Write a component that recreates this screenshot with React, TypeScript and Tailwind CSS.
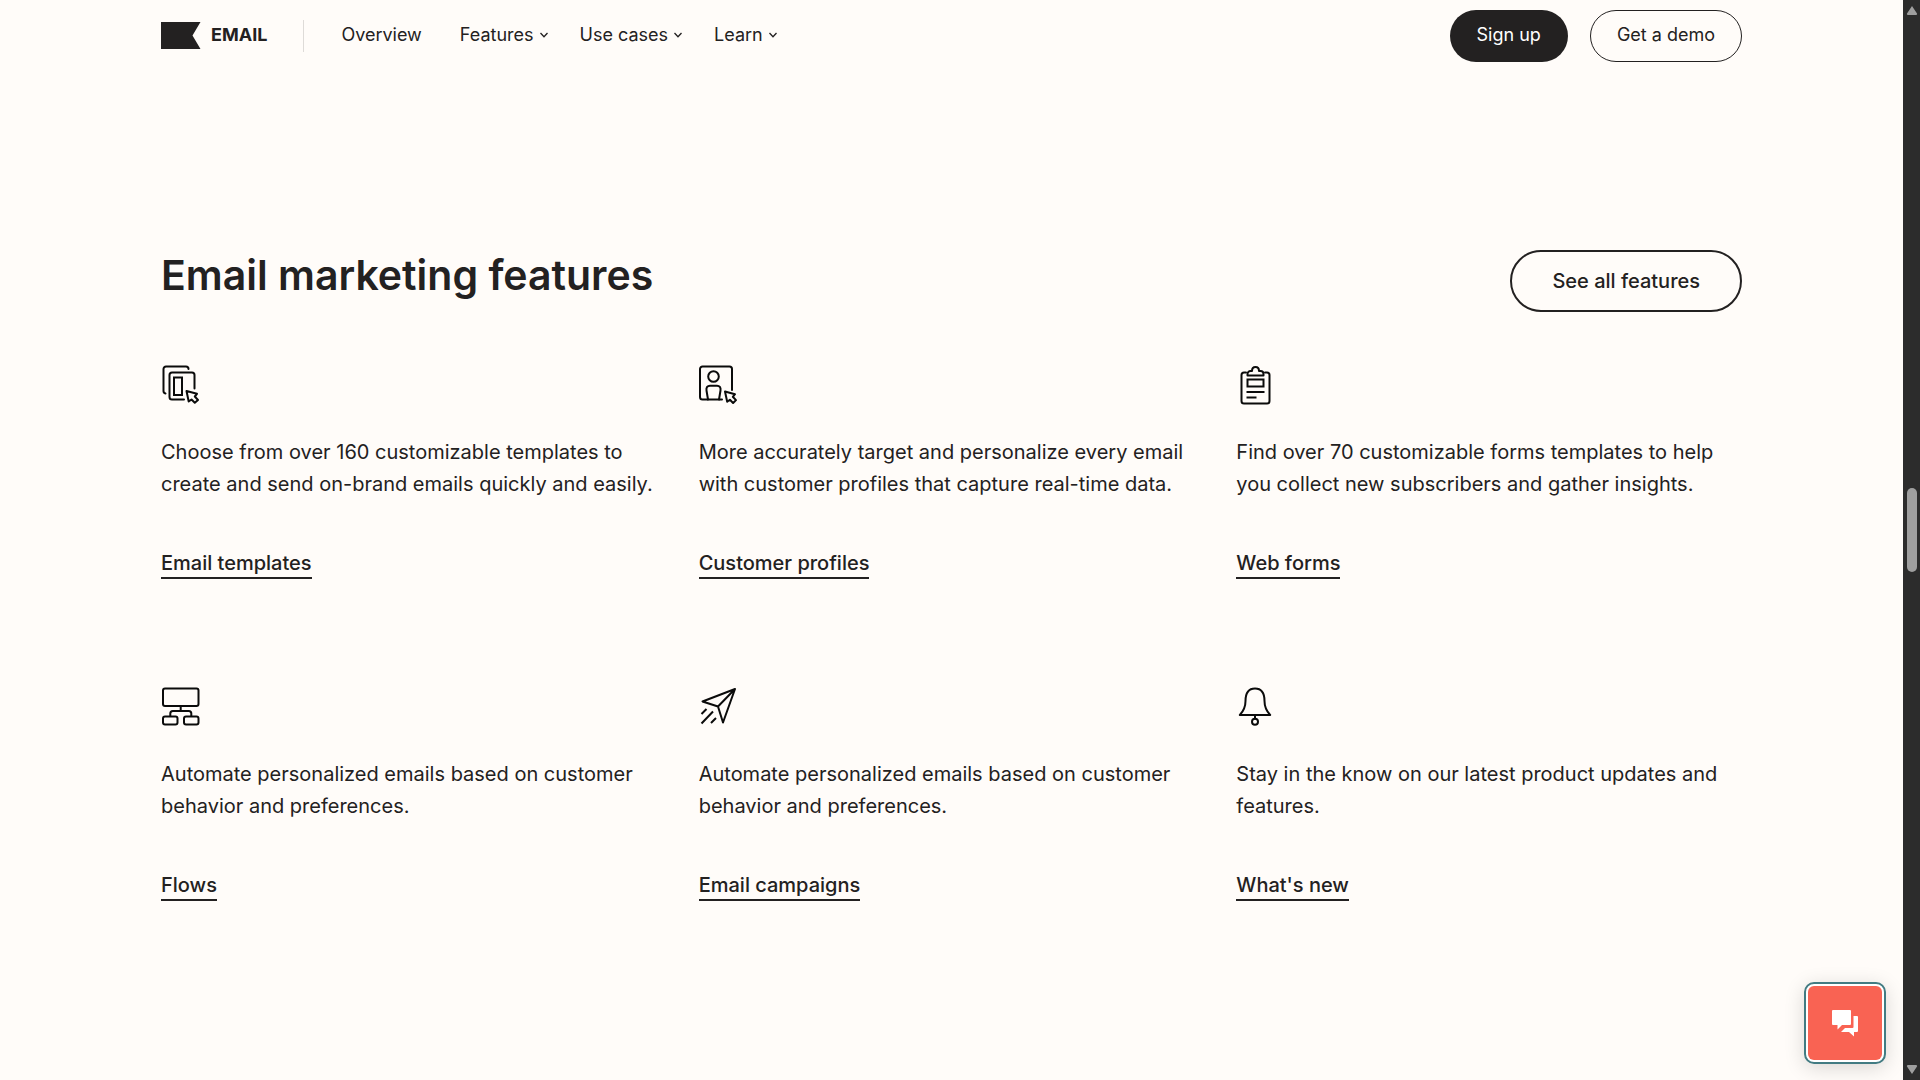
import type { ReactNode } from "react";

const icon = {
  className: "size-10",
  viewBox: "0 0 40 40",
  fill: "none",
  stroke: "#0b0b0b",
  strokeWidth: 2,
  strokeLinecap: "round" as const,
  strokeLinejoin: "round" as const,
  "aria-hidden": true,
};

function TemplatesIcon() {
  return (
    <svg {...icon}>
      <path d="M4.5 28.5a2.5 2.5 0 0 1-2-2.5V4a2.500 2.500 0 0 1 2.500-2.500h20a2.500 2.500 0 0 1 2.500 2.500" />
      <path d="M23 34.500H11a2.500 2.500 0 0 1-2.500-2.500V10a2.500 2.500 0 0 1 2.500-2.500h20a2.500 2.500 0 0 1 2.500 2.500v13.500" />
      <path strokeLinejoin="miter" d="M13 12.500h8v17.500h-8z" />
      <path d="M25.500 26l2.200 10.500 2.800-2 3.300 3.300 3.200-2.800-3.200-3.500 2.200-2.700z" />
    </svg>
  );
}

function ProfilesIcon() {
  return (
    <svg {...icon}>
      <path d="M23 34.500H3.500A2.500 2.500 0 0 1 1 32V4A2.500 2.500 0 0 1 3.500 1.500H30.500A2.500 2.500 0 0 1 33 4v21" />
      <circle cx="14.500" cy="11.500" r="5.300" />
      <path d="M9 34.500L7.500 25.500c-.5-3 1-4.800 3.500-4.800h7c2.500 0 4 1.800 3.500 4.800l-1.500 9" />
      <path d="M26 26.500l2.200 10.300 2.700-2 3.200 3.200 2.900-2.900-3.200-3.300 2.200-2.600z" />
    </svg>
  );
}

function FormsIcon() {
  return (
    <svg {...icon}>
      <path d="M10 7.500H8A2.500 2.500 0 0 0 5.500 10v26A2.500 2.500 0 0 0 8 38.500h23a2.500 2.500 0 0 0 2.500-2.500V10A2.500 2.500 0 0 0 31 7.500h-2" />
      <path d="M11.500 10.500h16V9a3 3 0 0 0-3-3h-1.500c0-2.500-1.500-4-3.500-4S16 3.500 16 6h-1.500a3 3 0 0 0-3 3z" />
      <path strokeLinejoin="miter" d="M11.500 14.500h16v7h-16z" />
      <path strokeLinecap="butt" d="M10.500 27h18M10.500 32.500h10" />
    </svg>
  );
}

function FlowsIcon() {
  return (
    <svg {...icon}>
      <rect x="2" y="1.500" width="35.500" height="17.500" rx="2" />
      <rect x="2" y="29.500" width="14.500" height="8" rx="2" />
      <rect x="23" y="29.500" width="14.500" height="8" rx="2" />
      <path d="M19.700 19v5M9.300 29v-2.500A2.500 2.500 0 0 1 11.800 24h16a2.500 2.500 0 0 1 2.500 2.500V29" />
    </svg>
  );
}

function CampaignsIcon() {
  return (
    <svg {...icon}>
      <path d="M36 2L3.500 14.500l15.500 5 5 16zM36 2L19 19.500" />
      <path strokeLinecap="butt" d="M7.500 22l-5 5M14 24.500L2.500 36.500M17 31l-5 5" />
    </svg>
  );
}

function BellIcon() {
  return (
    <svg {...icon}>
      <path d="M3.800 28h30.400c-3.800-4-5.700-8.500-5.700-14 0-8-3.300-12.500-9.500-12.500S9.500 6 9.500 14c0 5.500-1.900 10-5.700 14zM19 28v3.500" />
      <circle cx="19" cy="34.700" r="3" />
    </svg>
  );
}

const features: { art: ReactNode; text: string; link: string }[] = [
  {
    art: <TemplatesIcon />,
    text: "Choose from over 160 customizable templates to create and send on-brand emails quickly and easily.",
    link: "Email templates",
  },
  {
    art: <ProfilesIcon />,
    text: "More accurately target and personalize every email with customer profiles that capture real-time data.",
    link: "Customer profiles",
  },
  {
    art: <FormsIcon />,
    text: "Find over 70 customizable forms templates to help you collect new subscribers and gather insights.",
    link: "Web forms",
  },
  {
    art: <FlowsIcon />,
    text: "Automate personalized emails based on customer behavior and preferences.",
    link: "Flows",
  },
  {
    art: <CampaignsIcon />,
    text: "Automate personalized emails based on customer behavior and preferences.",
    link: "Email campaigns",
  },
  {
    art: <BellIcon />,
    text: "Stay in the know on our latest product updates and features.",
    link: "What's new",
  },
];

function MenuButton({ label }: { label: string }) {
  return (
    <button type="button" className="flex items-center gap-1.5">
      {label}
      <svg
        className="mt-0.5 h-2 w-2"
        viewBox="0 0 8 8"
        fill="none"
        stroke="currentColor"
        strokeWidth="1.3"
        aria-hidden
      >
        <path d="M.5 2L4 5.800 7.500 2" />
      </svg>
    </button>
  );
}

function Header() {
  return (
    <header className="flex items-start justify-between pt-2.5">
      <div className="flex h-12 items-center">
        <a href="#" className="flex items-center gap-2.5 text-[18px] font-bold">
          <svg className="mt-0.5 h-[27px] w-10" viewBox="0 0 40 27" aria-hidden>
            <path d="M0 0h39.500l-8 13.500 8 13.500H0z" fill="#232121" />
          </svg>
          EMAIL
        </a>
        <span className="mt-1 mr-[37px] ml-9 h-8 w-px bg-[#dedbd8]" />
        <nav className="flex items-center gap-8 text-[18px]">
          <a href="#" className="mr-1.5">
            Overview
          </a>
          <MenuButton label="Features" />
          <MenuButton label="Use cases" />
          <MenuButton label="Learn" />
        </nav>
      </div>
      <div className="flex items-center gap-[22px] text-[18px]">
        <button
          type="button"
          className="h-[52px] rounded-full bg-[#232121] px-[27px] pb-1 text-white"
        >
          Sign up
        </button>
        <button
          type="button"
          className="h-[52px] rounded-full border border-[#232121] px-[26px] pb-1"
        >
          Get a demo
        </button>
      </div>
    </header>
  );
}

function Scrollbar() {
  return (
    <div className="flex w-[17px] shrink-0 flex-col items-center bg-[#2c2c2c] py-1.5" aria-hidden>
      <svg className="h-2.5 w-3" viewBox="0 0 12 10">
        <path d="M6 0l5 7.500a1 1 0 0 1-1 1.500H2a1 1 0 0 1-1-1.500z" fill="#9f9f9f" />
      </svg>
      <div className="grow-[48]" />
      <div className="h-[84px] w-2.5 rounded-full bg-[#9f9f9f]" />
      <div className="grow-[50]" />
      <svg className="h-2.5 w-3" viewBox="0 0 12 10">
        <path d="M6 10l5-7.500A1 1 0 0 0 10 1H2a1 1 0 0 0-1 1.500z" fill="#9f9f9f" />
      </svg>
    </div>
  );
}

export default function App() {
  return (
    <div className="flex h-screen bg-[#fffcf9] font-['Inter',sans-serif] text-[#232121]">
      <div className="min-w-0 flex-1 overflow-hidden px-[161px]">
        <Header />
        <main className="pt-[188px]">
          <div className="flex items-start justify-between">
            <h1 className="text-[41px] leading-[50px] font-semibold">Email marketing features</h1>
            <button
              type="button"
              className="h-[62px] rounded-full border-2 border-[#232121] px-10 text-[20px] font-medium"
            >
              See all features
            </button>
          </div>
          <ul className="mt-[53px] grid grid-cols-3 gap-x-8 gap-y-[108px]">
            {features.map((f) => (
              <li key={f.link}>
                {f.art}
                <p className="mt-[31px] text-[20px] leading-8">{f.text}</p>
                <a
                  href="#"
                  className="mt-[49px] inline-block border-b-2 border-[#232121] text-[20px] leading-7 font-medium"
                >
                  {f.link}
                </a>
              </li>
            ))}
          </ul>
        </main>
      </div>
      <Scrollbar />
      <button
        type="button"
        aria-label="Open chat"
        className="fixed right-[34px] bottom-4 flex size-[82px] items-center justify-center rounded-[10px] border-2 border-[#427b82] bg-white p-0.5 shadow-[0_4px_20px_rgba(0,0,0,0.15)]"
      >
        <span className="flex size-full items-center justify-center rounded-md bg-[#f96353]">
          <svg className="size-7" viewBox="0 0 28 28" fill="#fff" aria-hidden>
            <path d="M2 1h17a1 1 0 0 1 1 1v13a1 1 0 0 1-1 1h-8l-4.500 4.500V16H2a1 1 0 0 1-1-1V2a1 1 0 0 1 1-1z" />
            <path d="M22.500 7H26a1 1 0 0 1 1 1v14a1 1 0 0 1-1 1h-3v4.500L18 23h-8l4-4h7.500a1 1 0 0 0 1-1z" />
          </svg>
        </span>
      </button>
    </div>
  );
}
